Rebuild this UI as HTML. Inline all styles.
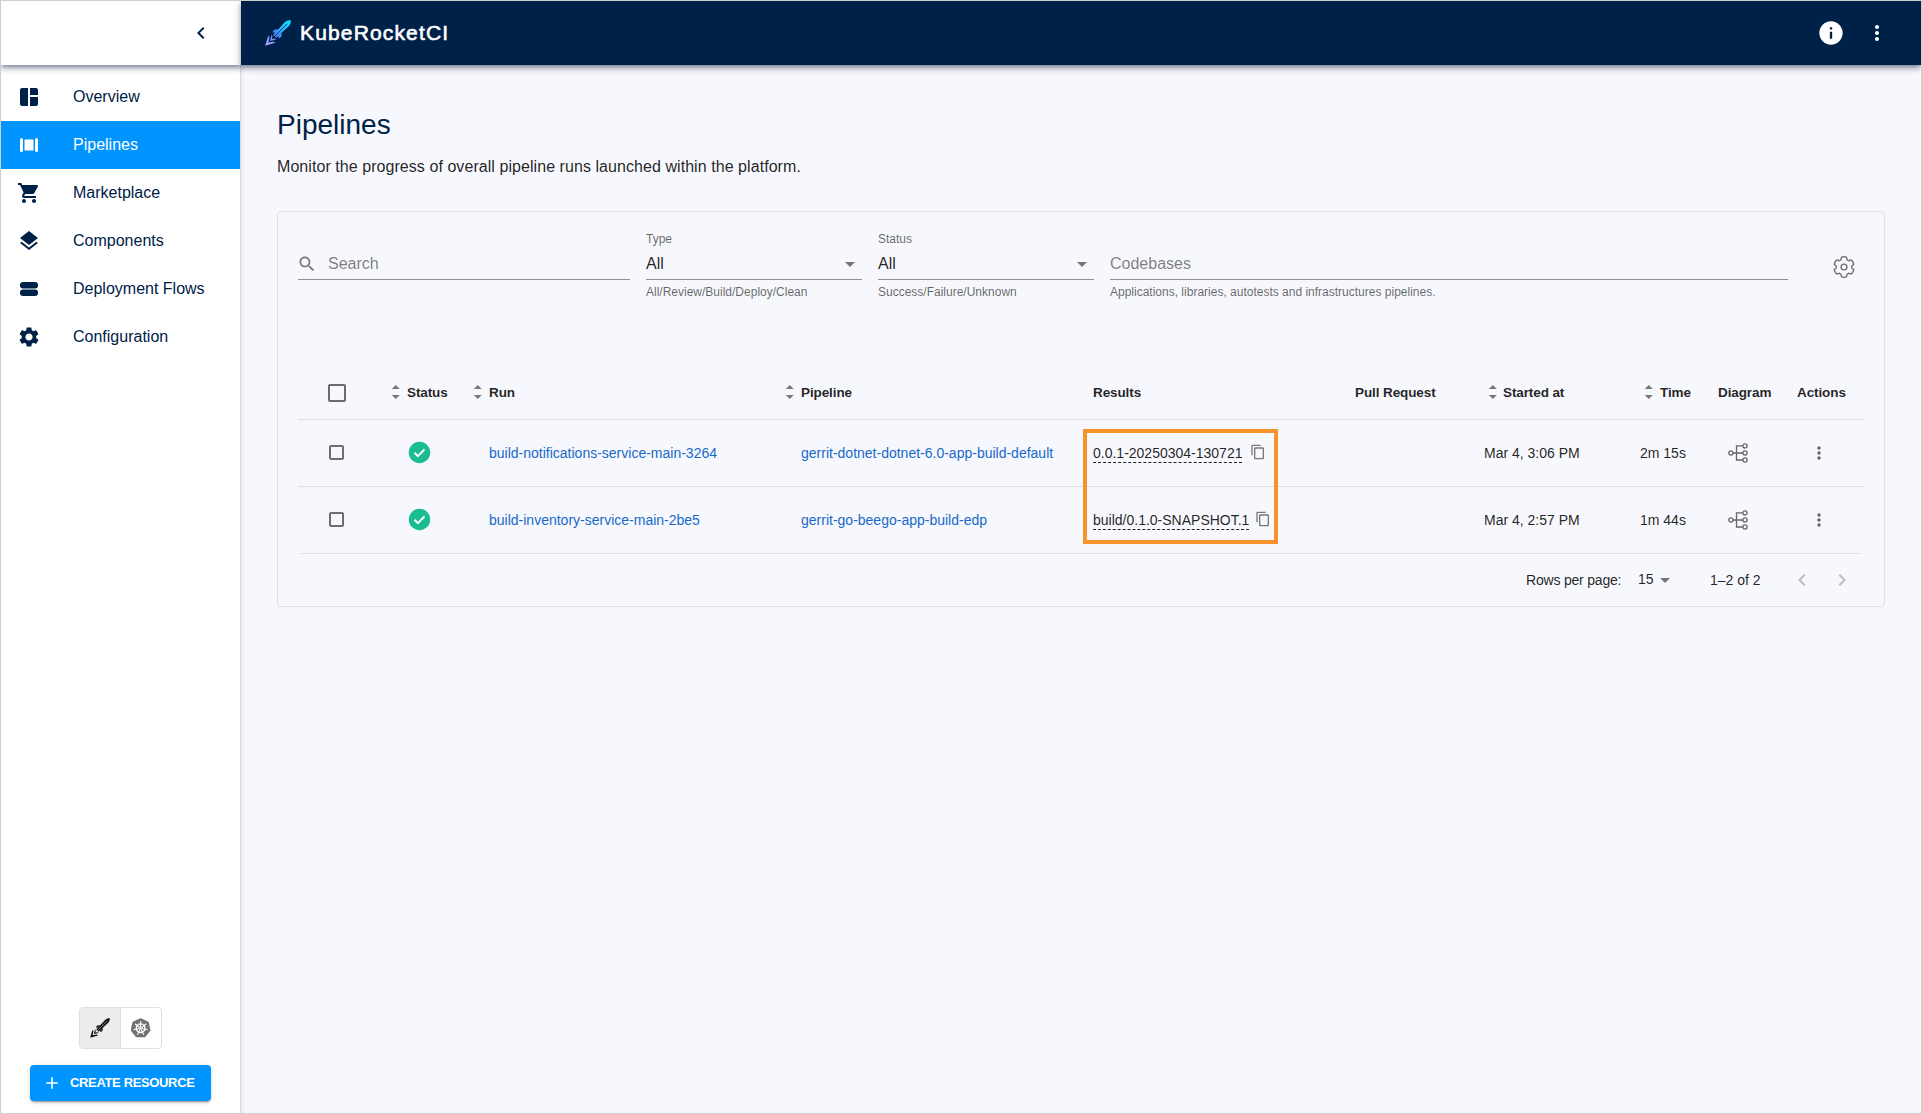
<!DOCTYPE html>
<html><head><meta charset="utf-8">
<style>
*{box-sizing:border-box;margin:0;padding:0}
html,body{width:1922px;height:1114px;overflow:hidden}
body{font-family:"Liberation Sans",sans-serif;background:#f7f8fd;position:relative;color:rgba(0,0,0,0.87)}
.frame{position:absolute;left:0;top:0;width:1922px;height:1114px;border:1px solid #cfcfcf;pointer-events:none;z-index:50}
.abs{position:absolute}
svg{display:block}
/* sidebar */
.side{position:absolute;left:1px;top:1px;width:240px;height:1112px;background:#fff;border-right:1px solid #d9dade;box-shadow:1px 0 4px rgba(0,20,50,.07)}
.sidetop{position:absolute;left:1px;top:1px;width:240px;height:64px;background:#fff;box-shadow:0 2px 4px -1px rgba(0,25,60,.36),0 4px 5px 0 rgba(0,25,60,.22),0 1px 10px 0 rgba(0,25,60,.16);z-index:5}
.hdr{position:absolute;left:241px;top:1px;width:1680px;height:64px;background:#002147;box-shadow:0 2px 4px -1px rgba(0,25,60,.36),0 4px 5px 0 rgba(0,25,60,.22),0 1px 10px 0 rgba(0,25,60,.16);z-index:5}
.nav{position:absolute;left:1px;width:239px;height:48px;color:#002147;font-size:16px}
.nav .t{position:absolute;left:72px;top:15px;line-height:18px;white-space:nowrap}
.nav svg{position:absolute;left:16px;top:12px}
.nav.act{background:#0094ff;color:#fff}
.title{position:absolute;left:277px;top:108px;font-size:28px;line-height:34px;color:#002147}
.sub{position:absolute;left:277px;top:157px;font-size:16px;line-height:20px;color:rgba(0,0,0,.87);letter-spacing:0.06px}
.card{position:absolute;left:277px;top:211px;width:1608px;height:396px;border:1px solid #e0e1e6;border-radius:4px;background:#f7f8fd}
.lbl{position:absolute;font-size:12px;color:rgba(0,0,0,.6);line-height:14px;white-space:nowrap}
.val{position:absolute;font-size:16px;line-height:20px;color:rgba(0,0,0,.87);white-space:nowrap}
.ph{color:rgba(0,0,0,.5)}
.uline{position:absolute;height:1px;background:rgba(0,0,0,.42)}
.helper{position:absolute;font-size:12px;line-height:14px;color:rgba(0,0,0,.6);white-space:nowrap}
.th{position:absolute;font-size:13.5px;letter-spacing:-0.1px;font-weight:bold;line-height:16px;color:rgba(0,0,0,.87);white-space:nowrap;top:385px}
.td{position:absolute;font-size:14px;line-height:16px;color:rgba(0,0,0,.87);white-space:nowrap}
.lnk{color:#1769c9}
.hline{position:absolute;height:1px;background:#e0e0e3}
.sort{position:absolute;top:384px}
.cb{position:absolute;border:2px solid #6b6b6b;border-radius:2px}
.res{position:absolute;font-size:14px;line-height:16px;color:rgba(0,0,0,.87);white-space:nowrap;border-bottom:1px dashed #222;padding-bottom:1px}
</style></head><body>
<div class="frame"></div>
<div class="side"></div>
<div class="sidetop">
  <svg class="abs" style="left:188px;top:20px" width="24" height="24" viewBox="0 0 24 24"><path d="M15.41 7.41 14 6l-6 6 6 6 1.41-1.41L10.83 12z" fill="#002147"/></svg>
</div>
<div class="hdr">
  <svg class="abs" style="left:24px;top:19px" width="26" height="26" viewBox="0 0 26 26">
    <defs><linearGradient id="rg" gradientUnits="userSpaceOnUse" x1="0" y1="13" x2="0" y2="-13"><stop offset="0" stop-color="#b9a3f5"/><stop offset="0.4" stop-color="#4f86ff"/><stop offset="1" stop-color="#00ecff"/></linearGradient></defs>
    <g transform="translate(13 13) rotate(45) scale(1.3)" fill="url(#rg)">
      <path d="M0,-13.8 C1.4,-12.8 2.1,-11.2 2.1,-9.2 L1.6,3.6 L-1.6,3.6 L-2.1,-9.2 C-2.1,-11.2 -1.4,-12.8 0,-13.8Z"/>
      <path d="M-1.9,-2.2 L-3.8,0.2 L-3.4,2.6 L-1.8,1.6Z M1.9,-2.2 L3.8,0.2 L3.4,2.6 L1.8,1.6Z"/>
      <path d="M-3.9,6.8 L-2.5,6.8 L0,10.3 L2.5,6.8 L3.9,6.8 L0,13.9Z M-2.6,4.6 L-1.4,4.6 L0,6.5 L1.4,4.6 L2.6,4.6 L0,8.6Z"/>
      <path d="M0,-10 V4" stroke="#002147" stroke-width="0.6"/>
    </g>
  </svg>
  <div class="abs" style="left:59px;top:18.5px;font-size:21px;color:#fff;line-height:26px;letter-spacing:1.15px;-webkit-text-stroke:0.6px #fff">KubeRocketCI</div>
  <svg class="abs" style="left:1576px;top:18px" width="28" height="28" viewBox="0 0 24 24"><path fill="#fff" d="M12 2C6.48 2 2 6.48 2 12s4.48 10 10 10 10-4.48 10-10S17.52 2 12 2zm1 15h-2v-6h2v6zm0-8h-2V7h2v2z"/></svg>
  <svg class="abs" style="left:1624px;top:20px" width="24" height="24" viewBox="0 0 24 24"><path fill="#fff" d="M12 8c1.1 0 2-.9 2-2s-.9-2-2-2-2 .9-2 2 .9 2 2 2zm0 2c-1.1 0-2 .9-2 2s.9 2 2 2 2-.9 2-2-.9-2-2-2zm0 6c-1.1 0-2 .9-2 2s.9 2 2 2 2-.9 2-2-.9-2-2-2z"/></svg>
</div>

<div class="nav" style="top:73px">
  <svg width="24" height="24" viewBox="0 0 24 24"><path fill="#002147" d="M11 21H5c-1.1 0-2-.9-2-2V5c0-1.1.9-2 2-2h6v18zm2 0h6c1.1 0 2-.9 2-2v-7h-8v9zm8-11V5c0-1.1-.9-2-2-2h-6v7h8z"/></svg>
  <div class="t">Overview</div></div>
<div class="nav act" style="top:121px">
  <svg width="24" height="24" viewBox="0 0 24 24"><g fill="#fff"><rect x="3" y="5" width="3" height="14" rx="1.5"/><rect x="18" y="5" width="3" height="14" rx="1.5"/><rect x="7.5" y="6.5" width="9" height="11" rx="0.5"/></g></svg>
  <div class="t">Pipelines</div></div>
<div class="nav" style="top:169px">
  <svg width="24" height="24" viewBox="0 0 24 24"><path fill="#002147" d="M7 18c-1.1 0-1.99.9-1.99 2S5.9 22 7 22s2-.9 2-2-.9-2-2-2zM1 2v2h2l3.6 7.59-1.35 2.45c-.16.28-.25.61-.25.96 0 1.1.9 2 2 2h12v-2H7.42c-.14 0-.25-.11-.25-.25l.03-.12.9-1.63h7.45c.75 0 1.410-.41 1.75-1.03l3.58-6.49c.08-.14.12-.31.12-.48 0-.55-.45-1-1-1H5.21l-.94-2H1zm16 16c-1.1 0-1.99.9-1.99 2s.89 2 1.99 2 2-.9 2-2-.9-2-2-2z"/></svg>
  <div class="t">Marketplace</div></div>
<div class="nav" style="top:217px">
  <svg width="24" height="24" viewBox="0 0 24 24"><path fill="#002147" d="M11.99 18.54l-7.37-5.73L3 14.07l9 7 9-7-1.63-1.27-7.38 5.74zM12 16l7.36-5.73L21 9l-9-7-9 7 1.63 1.27L12 16z"/></svg>
  <div class="t">Components</div></div>
<div class="nav" style="top:265px">
  <svg width="24" height="24" viewBox="0 0 24 24"><g fill="#002147"><rect x="3" y="5" width="18" height="6.5" rx="3"/><rect x="3" y="12.5" width="18" height="6.5" rx="3"/></g></svg>
  <div class="t">Deployment Flows</div></div>
<div class="nav" style="top:313px">
  <svg width="24" height="24" viewBox="0 0 24 24"><path fill="#002147" d="M19.14 12.94c.04-.3.06-.61.06-.94 0-.32-.02-.64-.07-.94l2.03-1.58c.18-.14.23-.41.12-.61l-1.92-3.32c-.12-.22-.37-.29-.59-.22l-2.39.96c-.5-.38-1.030-.7-1.62-.94l-.36-2.54c-.04-.24-.24-.41-.48-.41h-3.84c-.24 0-.43.17-.47.41l-.36 2.54c-.59.24-1.13.57-1.62.94l-2.39-.96c-.22-.08-.47 0-.59.22L2.74 8.87c-.12.21-.08.47.12.61l2.03 1.58c-.05.3-.09.63-.09.94s.02.64.07.94l-2.03 1.58c-.18.14-.23.41-.12.61l1.92 3.32c.12.22.37.29.59.22l2.39-.96c.5.38 1.03.7 1.62.94l.36 2.54c.05.24.24.41.48.41h3.84c.24 0 .44-.17.47-.41l.36-2.54c.59-.24 1.13-.56 1.62-.94l2.39.96c.22.08.47 0 .59-.22l1.92-3.32c.12-.22.07-.47-.12-.61l-2.01-1.58zM12 15.6c-1.98 0-3.6-1.62-3.6-3.6s1.62-3.6 3.6-3.6 3.6 1.62 3.6 3.6-1.62 3.6-3.6 3.6z"/></svg>
  <div class="t">Configuration</div></div>

<!-- bottom of sidebar -->
<div class="abs" style="left:79px;top:1007px;width:83px;height:42px;border:1px solid #e0e0e0;border-radius:4px;overflow:hidden;background:#fff">
  <div class="abs" style="left:0;top:0;width:41px;height:40px;background:#ececec;border-right:1px solid #dcdcdc"></div>
  <svg class="abs" style="left:10px;top:10px" width="20" height="20" viewBox="0 0 20 20">
    <g transform="translate(10 10) rotate(45)" fill="#111">
      <path d="M0,-13.8 C1.4,-12.8 2.1,-11.2 2.1,-9.2 L1.6,3.6 L-1.6,3.6 L-2.1,-9.2 C-2.1,-11.2 -1.4,-12.8 0,-13.8Z"/>
      <path d="M-1.9,-2.2 L-3.8,0.2 L-3.4,2.6 L-1.8,1.6Z M1.9,-2.2 L3.8,0.2 L3.4,2.6 L1.8,1.6Z"/>
      <path d="M-3.9,6.8 L-2.5,6.8 L0,10.3 L2.5,6.8 L3.9,6.8 L0,13.9Z M-2.6,4.6 L-1.4,4.6 L0,6.5 L1.4,4.6 L2.6,4.6 L0,8.6Z"/>
      <path d="M0,-10 V4" stroke="#999" stroke-width="0.7"/>
    </g>
  </svg>
  <svg class="abs" style="left:51px;top:10px" width="20" height="20" viewBox="0 0 20 20">
    <polygon points="9.60,0.80 17.11,4.34 18.96,12.29 13.77,18.67 5.43,18.67 0.24,12.29 2.09,4.34" fill="#727272" stroke="#727272" stroke-width="1.2" stroke-linejoin="round"/>
    <g stroke="#fff" fill="none"><circle cx="9.6" cy="10.2" r="4.3" stroke-width="1.4"/><path d="M9.60 9.00L9.60 3.00M10.54 9.45L15.23 5.71M10.77 10.47L16.62 11.80M10.12 11.28L12.72 16.69M9.08 11.28L6.48 16.69M8.43 10.47L2.58 11.80M8.66 9.45L3.97 5.71" stroke-width="1.1"/></g>
    <circle cx="9.6" cy="10.2" r="1.1" fill="#fff"/>
  </svg>
</div>
<div class="abs" style="left:30px;top:1065px;width:181px;height:36px;background:#0094ff;border-radius:4px;box-shadow:0 3px 1px -2px rgba(0,0,0,.2),0 2px 2px 0 rgba(0,0,0,.14),0 1px 5px 0 rgba(0,0,0,.12)">
  <svg class="abs" style="left:14px;top:10px" width="16" height="16" viewBox="0 0 16 16"><path d="M8 2.2v11.6M2.2 8h11.6" stroke="#fff" stroke-width="1.6"/></svg>
  <div class="abs" style="left:40px;top:10px;font-size:13px;font-weight:bold;line-height:16px;color:#fff;white-space:nowrap;letter-spacing:-0.35px">CREATE RESOURCE</div>
</div>

<div class="title">Pipelines</div>
<div class="sub">Monitor the progress of overall pipeline runs launched within the platform.</div>
<div class="card"></div>

<!-- filters -->
<svg class="abs" style="left:297px;top:254px" width="20" height="20" viewBox="0 0 24 24"><path fill="#757575" d="M15.5 14h-.79l-.28-.27C15.41 12.59 16 11.11 16 9.5 16 5.91 13.09 3 9.5 3S3 5.91 3 9.5 5.91 16 9.5 16c1.61 0 3.09-.59 4.23-1.57l.27.28v.79l5 4.99L20.49 19l-4.99-5zm-6 0C7.01 14 5 11.99 5 9.5S7.01 5 9.5 5 14 7.01 14 9.5 11.99 14 9.5 14z"/></svg>
<div class="val ph" style="left:328px;top:254px">Search</div>
<div class="uline" style="left:298px;top:279px;width:332px"></div>

<div class="lbl" style="left:646px;top:232px">Type</div>
<div class="val" style="left:646px;top:254px">All</div>
<svg class="abs" style="left:838px;top:252px" width="24" height="24" viewBox="0 0 24 24"><path d="M7 10l5 5 5-5z" fill="#757575"/></svg>
<div class="uline" style="left:646px;top:279px;width:216px"></div>
<div class="helper" style="left:646px;top:285px">All/Review/Build/Deploy/Clean</div>

<div class="lbl" style="left:878px;top:232px">Status</div>
<div class="val" style="left:878px;top:254px">All</div>
<svg class="abs" style="left:1070px;top:252px" width="24" height="24" viewBox="0 0 24 24"><path d="M7 10l5 5 5-5z" fill="#757575"/></svg>
<div class="uline" style="left:878px;top:279px;width:216px"></div>
<div class="helper" style="left:878px;top:285px">Success/Failure/Unknown</div>

<div class="val ph" style="left:1110px;top:254px">Codebases</div>
<div class="uline" style="left:1110px;top:279px;width:678px"></div>
<div class="helper" style="left:1110px;top:285px">Applications, libraries, autotests and infrastructures pipelines.</div>

<svg class="abs" style="left:1832px;top:255px" width="24" height="24" viewBox="0 0 24 24"><g fill="none" stroke="#707070" stroke-width="1.4" stroke-linejoin="round"><path d="M8.87 4.97L9.53 2.10A10.2 10.2 0 0 1 14.47 2.10L15.13 4.97A7.7 7.7 0 0 1 16.53 5.77L19.34 4.91A10.2 10.2 0 0 1 21.80 9.19L19.66 11.20A7.7 7.7 0 0 1 19.66 12.80L21.80 14.81A10.2 10.2 0 0 1 19.34 19.09L16.53 18.23A7.7 7.7 0 0 1 15.13 19.03L14.47 21.90A10.2 10.2 0 0 1 9.53 21.90L8.87 19.03A7.7 7.7 0 0 1 7.47 18.23L4.66 19.09A10.2 10.2 0 0 1 2.20 14.81L4.34 12.80A7.7 7.7 0 0 1 4.34 11.20L2.20 9.19A10.2 10.2 0 0 1 4.66 4.91L7.47 5.77A7.7 7.7 0 0 1 8.87 4.97Z"/><circle cx="12" cy="12" r="2.9"/></g></svg>

<!-- table header -->
<div class="cb" style="left:328px;top:384px;width:18px;height:18px"></div>
<svg class="sort" style="left:391px" width="10" height="16" viewBox="0 0 10 16"><path d="M0.8 5 L4.8 1 L8.8 5z M0.8 11 L4.8 15 L8.8 11z" fill="#777"/></svg>
<div class="th" style="left:407px">Status</div>
<svg class="sort" style="left:473px" width="10" height="16" viewBox="0 0 10 16"><path d="M0.8 5 L4.8 1 L8.8 5z M0.8 11 L4.8 15 L8.8 11z" fill="#777"/></svg>
<div class="th" style="left:489px">Run</div>
<svg class="sort" style="left:785px" width="10" height="16" viewBox="0 0 10 16"><path d="M0.8 5 L4.8 1 L8.8 5z M0.8 11 L4.8 15 L8.8 11z" fill="#777"/></svg>
<div class="th" style="left:801px">Pipeline</div>
<div class="th" style="left:1093px">Results</div>
<div class="th" style="left:1355px">Pull Request</div>
<svg class="sort" style="left:1488px" width="10" height="16" viewBox="0 0 10 16"><path d="M0.8 5 L4.8 1 L8.8 5z M0.8 11 L4.8 15 L8.8 11z" fill="#777"/></svg>
<div class="th" style="left:1503px">Started at</div>
<svg class="sort" style="left:1644px" width="10" height="16" viewBox="0 0 10 16"><path d="M0.8 5 L4.8 1 L8.8 5z M0.8 11 L4.8 15 L8.8 11z" fill="#777"/></svg>
<div class="th" style="left:1660px">Time</div>
<div class="th" style="left:1718px">Diagram</div>
<div class="th" style="left:1797px">Actions</div>
<div class="hline" style="left:298px;top:419px;width:1566px"></div>

<!-- row 1 -->
<div class="cb" style="left:329px;top:445px;width:15px;height:15px;border-width:2px;border-color:#6e6e6e"></div>
<svg class="abs" style="left:407px;top:440px" width="25" height="25" viewBox="0 0 24 24"><circle cx="12" cy="12" r="10.3" fill="#1abc91"/><path d="M7.2 12.3 L10.5 15.5 L16.8 9" stroke="#fff" stroke-width="2" fill="none"/></svg>
<div class="td lnk" style="left:489px;top:445px">build-notifications-service-main-3264</div>
<div class="td lnk" style="left:801px;top:445px">gerrit-dotnet-dotnet-6.0-app-build-default</div>
<div class="res" style="left:1093px;top:445px">0.0.1-20250304-130721</div>
<svg class="abs" style="left:1250px;top:444px" width="16" height="16" viewBox="0 0 24 24"><path fill="#777" d="M16 1H4c-1.1 0-2 .9-2 2v14h2V3h12V1zm3 4H8c-1.1 0-2 .9-2 2v14c0 1.1.9 2 2 2h11c1.1 0 2-.9 2-2V7c0-1.1-.9-2-2-2zm0 16H8V7h11v14z"/></svg>
<div class="td" style="left:1484px;top:445px">Mar 4, 3:06 PM</div>
<div class="td" style="left:1640px;top:445px">2m 15s</div>
<svg class="abs" style="left:1728px;top:443px" width="20" height="20" viewBox="0 0 20 20"><g stroke="#666" stroke-width="1.3" fill="none"><circle cx="2.9" cy="10" r="2.1"/><circle cx="17" cy="2.9" r="2.1"/><circle cx="17" cy="10" r="2.1"/><circle cx="17" cy="17" r="2.1"/><path d="M5 10 H14.9 M14.9 2.9 H8.5 V17 H14.9"/></g></svg>
<svg class="abs" style="left:1809px;top:443px" width="20" height="20" viewBox="0 0 24 24"><path fill="#666" d="M12 8c1.1 0 2-.9 2-2s-.9-2-2-2-2 .9-2 2 .9 2 2 2zm0 2c-1.1 0-2 .9-2 2s.9 2 2 2 2-.9 2-2-.9-2-2-2zm0 6c-1.1 0-2 .9-2 2s.9 2 2 2 2-.9 2-2-.9-2-2-2z"/></svg>
<div class="hline" style="left:298px;top:486px;width:1566px"></div>

<!-- row 2 -->
<div class="cb" style="left:329px;top:512px;width:15px;height:15px;border-width:2px;border-color:#6e6e6e"></div>
<svg class="abs" style="left:407px;top:507px" width="25" height="25" viewBox="0 0 24 24"><circle cx="12" cy="12" r="10.3" fill="#1abc91"/><path d="M7.2 12.3 L10.5 15.5 L16.8 9" stroke="#fff" stroke-width="2" fill="none"/></svg>
<div class="td lnk" style="left:489px;top:512px">build-inventory-service-main-2be5</div>
<div class="td lnk" style="left:801px;top:512px">gerrit-go-beego-app-build-edp</div>
<div class="res" style="left:1093px;top:512px">build/0.1.0-SNAPSHOT.1</div>
<svg class="abs" style="left:1255px;top:511px" width="16" height="16" viewBox="0 0 24 24"><path fill="#777" d="M16 1H4c-1.1 0-2 .9-2 2v14h2V3h12V1zm3 4H8c-1.1 0-2 .9-2 2v14c0 1.1.9 2 2 2h11c1.1 0 2-.9 2-2V7c0-1.1-.9-2-2-2zm0 16H8V7h11v14z"/></svg>
<div class="td" style="left:1484px;top:512px">Mar 4, 2:57 PM</div>
<div class="td" style="left:1640px;top:512px">1m 44s</div>
<svg class="abs" style="left:1728px;top:510px" width="20" height="20" viewBox="0 0 20 20"><g stroke="#666" stroke-width="1.3" fill="none"><circle cx="2.9" cy="10" r="2.1"/><circle cx="17" cy="2.9" r="2.1"/><circle cx="17" cy="10" r="2.1"/><circle cx="17" cy="17" r="2.1"/><path d="M5 10 H14.9 M14.9 2.9 H8.5 V17 H14.9"/></g></svg>
<svg class="abs" style="left:1809px;top:510px" width="20" height="20" viewBox="0 0 24 24"><path fill="#666" d="M12 8c1.1 0 2-.9 2-2s-.9-2-2-2-2 .9-2 2 .9 2 2 2zm0 2c-1.1 0-2 .9-2 2s.9 2 2 2 2-.9 2-2-.9-2-2-2zm0 6c-1.1 0-2 .9-2 2s.9 2 2 2 2-.9 2-2-.9-2-2-2z"/></svg>
<div class="hline" style="left:300px;top:553px;width:1561px"></div>

<!-- orange highlight -->
<div class="abs" style="left:1083px;top:429px;width:195px;height:115px;border:4px solid #f7922d"></div>

<!-- pagination -->
<div class="td" style="left:1526px;top:572px;letter-spacing:-0.2px">Rows per page:</div>
<div class="td" style="left:1638px;top:571px">15</div>
<svg class="abs" style="left:1653px;top:568px" width="24" height="24" viewBox="0 0 24 24"><path d="M7 10l5 5 5-5z" fill="#757575"/></svg>
<div class="td" style="left:1710px;top:572px">1–2 of 2</div>
<svg class="abs" style="left:1790px;top:568px" width="24" height="24" viewBox="0 0 24 24"><path d="M15.41 7.41 14 6l-6 6 6 6 1.41-1.41L10.83 12z" fill="#bdbdbd"/></svg>
<svg class="abs" style="left:1830px;top:568px" width="24" height="24" viewBox="0 0 24 24"><path d="M10 6 8.59 7.41 13.17 12l-4.58 4.59L10 18l6-6z" fill="#bdbdbd"/></svg>

</body></html>
